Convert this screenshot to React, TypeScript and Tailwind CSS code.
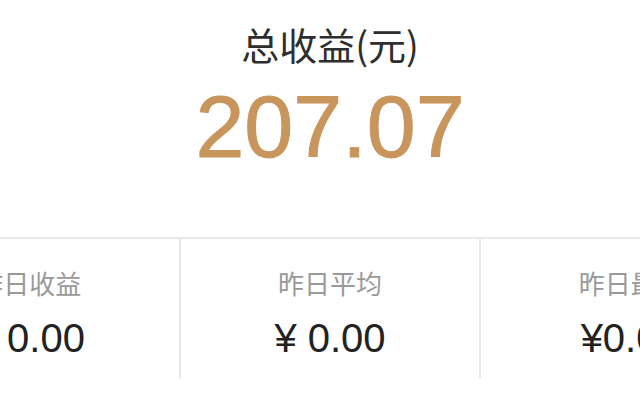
import React from "react";

const cjk = "font-['Noto_Sans_CJK_SC','Noto_Sans',sans-serif]";
const num = "font-['Liberation_Sans','Noto_Sans_CJK_SC',sans-serif]";

const stats = [
  { label: "昨日收益", value: "¥ 0.00" },
  { label: "昨日平均", value: "¥ 0.00" },
  { label: "昨日最高", value: "¥0.00" },
];

export default function App() {
  return (
    <div className="h-[415px] w-[640px] overflow-hidden bg-white">
      <div className="-ml-[120px] flex w-[900px] flex-col items-center">
        <div className={`pt-[25px] text-[38px] leading-none text-[#2e2e2e] ${cjk}`}>总收益(元)</div>
        <div className={`mt-[20px] text-[88px] leading-none text-[#c8955c] [-webkit-text-stroke:1px_#c8955c] ${num}`}>
          207.07
        </div>

        <div className="mt-[66px] flex w-full border-t-2 border-[#e8e8e8]">
          {stats.map((s, i) => (
            <div
              key={s.label}
              className={`flex flex-1 flex-col items-center pt-[31px] pb-[20px] ${
                i < stats.length - 1 ? "border-r-2 border-[#e8e8e8]" : ""
              }`}
            >
              <div className={`text-[26px] leading-none text-[#999999] ${cjk}`}>{s.label}</div>
              <div className={`mt-[22px] text-[40px] leading-none text-[#222222] ${num}`}>{s.value}</div>
            </div>
          ))}
        </div>
      </div>
    </div>
  );
}
